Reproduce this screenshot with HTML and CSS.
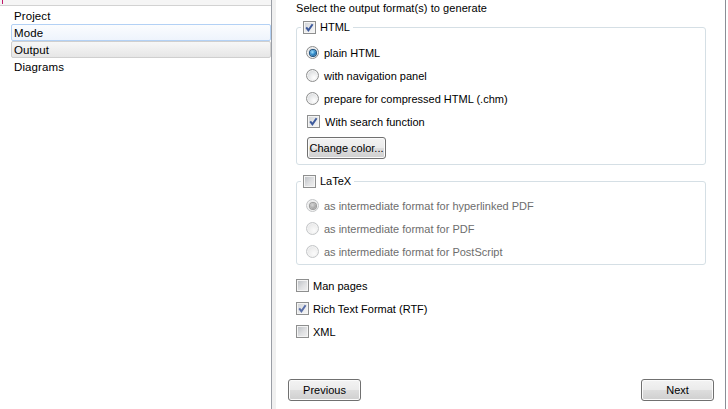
FILE: index.html
```html
<!DOCTYPE html>
<html>
<head>
<meta charset="utf-8">
<title>Output</title>
<link rel="stylesheet" href="styles.css">
</head>
<body>
<div class="app">
  <aside class="sidebar">
    <div class="top-strip"><span class="mark"></span></div>
    <ul class="nav">
      <li class="item">Project</li>
      <li class="item hover">Mode</li>
      <li class="item selected">Output</li>
      <li class="item">Diagrams</li>
    </ul>
  </aside>
  <div class="splitter"></div>
  <main class="panel">
    <div class="content">
      <p class="intro">Select the output format(s) to generate</p>

      <fieldset class="group group-html">
        <legend class="legend">
          <label class="opt"><span class="cb checked"><svg viewBox="0 0 11 11" width="11" height="11"><path d="M2.2 5.4 L4.4 8.2 L8.6 2.2" fill="none" stroke="#3d5a9c" stroke-width="2"/></svg></span>HTML</label>
        </legend>
        <div class="group-body">
          <label class="row"><span class="rb on"></span>plain HTML</label>
          <label class="row"><span class="rb"></span>with navigation panel</label>
          <label class="row"><span class="rb"></span>prepare for compressed HTML (.chm)</label>
          <label class="row row-cb"><span class="cb checked"><svg viewBox="0 0 11 11" width="11" height="11"><path d="M2.2 5.4 L4.4 8.2 L8.6 2.2" fill="none" stroke="#3d5a9c" stroke-width="2"/></svg></span>With search function</label>
          <button class="btn btn-color" type="button">Change color...</button>
        </div>
      </fieldset>

      <fieldset class="group group-latex">
        <legend class="legend">
          <label class="opt"><span class="cb"></span>LaTeX</label>
        </legend>
        <div class="group-body latex-body">
          <label class="row disabled"><span class="rb on off"></span>as intermediate format for hyperlinked PDF</label>
          <label class="row disabled"><span class="rb off"></span>as intermediate format for PDF</label>
          <label class="row disabled"><span class="rb off"></span>as intermediate format for PostScript</label>
        </div>
      </fieldset>

      <div class="formats">
        <label class="row"><span class="cb"></span>Man pages</label>
        <label class="row"><span class="cb checked"><svg viewBox="0 0 11 11" width="11" height="11"><path d="M2.2 5.4 L4.4 8.2 L8.6 2.2" fill="none" stroke="#5a6fa8" stroke-width="2"/></svg></span>Rich Text Format (RTF)</label>
        <label class="row"><span class="cb"></span>XML</label>
      </div>
    </div>

    <div class="footer">
      <button class="btn btn-nav" type="button">Previous</button>
      <button class="btn btn-nav" type="button">Next</button>
    </div>
  </main>
  <div class="edge"></div>
</div>
</body>
</html>
```

FILE: styles.css
```css
* {
  box-sizing: border-box;
  margin: 0;
  padding: 0;
}

html, body {
  width: 728px;
  height: 409px;
  overflow: hidden;
}

body {
  font-family: "Liberation Sans", Arial, sans-serif;
  font-size: 11px;
  color: #000;
  background: #fff;
}

.app {
  display: flex;
  height: 409px;
}

/* ---------- sidebar ---------- */
.sidebar {
  width: 272px;
  flex: none;
  border-right: 1px solid #9a9ea6;
  background: #fff;
  display: flex;
  flex-direction: column;
}

.top-strip {
  height: 6px;
  background: #f5f5f5;
  border-bottom: 1px solid #d2d2d2;
  padding-left: 2px;
  display: flex;
}

.mark {
  width: 1px;
  height: 4px;
  background: #c0186a;
}

.nav {
  list-style: none;
  padding-top: 1px;
}

.item {
  height: 17px;
  line-height: 15px;
  padding-top: 1px;
  margin-left: 11px;
  padding-left: 2px;
  border: 1px solid transparent;
  border-radius: 2px;
  font-size: 11.5px;
  letter-spacing: 0.1px;
}

.item.hover {
  border-color: #b3d1f5;
  background: linear-gradient(#fbfcfe, #eef4fc);
}

.item.selected {
  border-color: #cfcfcf;
  background: linear-gradient(#f7f7f7, #e6e6e6);
}

.splitter {
  width: 4px;
  flex: none;
  background: #f0f0f0;
}

/* ---------- main panel ---------- */
.panel {
  flex: 1;
  display: flex;
  flex-direction: column;
  border-right: 1px solid #8a8e96;
  background: #fff;
}

.edge {
  width: 2px;
  flex: none;
  background: #fff;
}

.content {
  flex: 1;
  padding-left: 20px;
}

.intro {
  height: 16px;
  line-height: 16px;
  letter-spacing: 0.07px;
}

.group {
  width: 410px;
  border: 1px solid #d5dfe5;
  border-radius: 3px;
  padding: 0 0 5px 4px;
}

.group-html {
  margin-top: 3px;
}

.group-latex {
  margin-top: 8px;
  padding-bottom: 1px;
}

.legend {
  padding: 0 3px 0 2px;
  height: 16px;
}

.opt {
  display: flex;
  align-items: center;
  height: 16px;
  gap: 4px;
}

.group-body {
  padding-top: 6px;
  padding-left: 5px;
}

.latex-body {
  padding-top: 5px;
}

.row {
  display: flex;
  align-items: center;
  height: 23px;
  gap: 5px;
}

.row-cb {
  padding-left: 1px;
}

.disabled {
  color: #6d6d6d;
}

.formats {
  margin-top: 9px;
}

.formats .row {
  gap: 4px;
}

/* ---------- checkbox ---------- */
.cb {
  width: 13px;
  height: 13px;
  flex: none;
  border: 1px solid #8e8f8f;
  background: linear-gradient(135deg, #b9bdc2 0%, #dfe0e2 55%, #f1f1f1 100%);
  box-shadow: inset 0 0 0 1px #f4f4f4;
  display: flex;
  align-items: center;
  justify-content: center;
}

.cb.checked {
  background: linear-gradient(135deg, #cdd0d4 0%, #eaebec 55%, #f6f6f6 100%);
}

.cb svg {
  display: block;
}

/* ---------- radio ---------- */
.rb {
  width: 13px;
  height: 13px;
  flex: none;
  border-radius: 50%;
  border: 1px solid #8e8f8f;
  background: radial-gradient(circle at 65% 70%, #ffffff 0%, #e9eaeb 45%, #c7cacd 100%);
  box-shadow: inset 0 0 0 1px #f3f3f3;
  display: flex;
  align-items: center;
  justify-content: center;
}

.rb.on::after {
  content: "";
  width: 6px;
  height: 6px;
  border-radius: 50%;
  background: radial-gradient(circle at 40% 35%, #a6e4ff 0%, #2f88c8 50%, #0f4470 100%);
  box-shadow: 0 0 0 1px #1b4f7c;
}

.rb.off {
  border-color: #c4c6c8;
  background: radial-gradient(circle at 65% 70%, #fbfbfb 0%, #eeeeee 50%, #dcdddf 100%);
}

.rb.on.off::after {
  background: radial-gradient(circle at 40% 35%, #d8d8d8 0%, #a8a8a8 60%, #8a8a8a 100%);
  box-shadow: 0 0 0 1px #9a9a9a;
}

/* ---------- buttons ---------- */
.btn {
  font-family: "Liberation Sans", Arial, sans-serif;
  font-size: 11px;
  color: #000;
  height: 22px;
  border: 1px solid #707070;
  border-radius: 3px;
  background: linear-gradient(#f3f3f3 0%, #ebebeb 48%, #dddddd 52%, #cfcfcf 100%);
  box-shadow: inset 0 0 0 1px #fbfbfb;
  display: flex;
  align-items: center;
  justify-content: center;
}

.btn-color {
  width: 79px;
  margin-top: 4px;
  margin-left: 1px;
  padding: 0;
}

.footer {
  display: flex;
  justify-content: space-between;
  padding: 0 11px 8px 12px;
}

.btn-nav {
  width: 73px;
}
```
